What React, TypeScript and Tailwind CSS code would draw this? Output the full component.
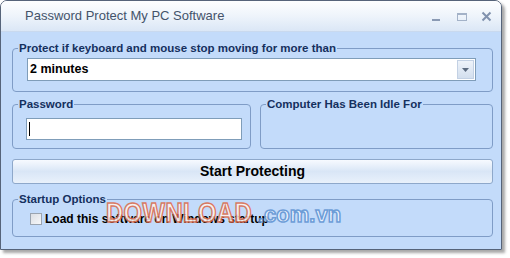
import React from "react";

const F = { fontFamily: '"Liberation Sans", Arial, sans-serif' };

function Group({
  label,
  className,
  inner,
  children,
}: {
  label: string;
  className?: string;
  inner?: string;
  children?: React.ReactNode;
}) {
  return (
    <fieldset
      className={
        "border border-[#7f9cc6] rounded-[4px] min-w-0 " + (className ?? "")
      }
    >
      <legend className="ml-[5px] px-[1px] text-[11.5px] leading-[14px] font-bold text-[#15305e]">
        {label}
      </legend>
      <div className={inner}>{children}</div>
    </fieldset>
  );
}

export default function App() {
  return (
    <div className="relative w-[510px] h-[258px] bg-white" style={F}>
      <div className="w-[502px] h-[250px] flex flex-col border border-[#56647a] rounded-t-[7px] shadow-[3px_3px_3px_rgba(0,0,0,0.35)] overflow-hidden">
        {/* title bar */}
        <div className="h-[31px] shrink-0 flex items-center bg-gradient-to-b from-[#fdfeff] via-[#eef4fb] to-[#dbe7f6] border-b border-[#c9d9ee]">
          <span className="ml-[24px] text-[13px] text-[#44536a]">
            Password Protect My PC Software
          </span>
          <div className="ml-auto flex items-center gap-[14px] mr-[9px]">
            <svg width="11" height="11" viewBox="0 0 11 11">
              <rect x="1" y="8" width="8" height="2" fill="#8a9ab4" />
            </svg>
            <svg width="11" height="11" viewBox="0 0 11 11">
              <rect x="1.5" y="2.5" width="9" height="7" fill="none" stroke="#a3b2c8" strokeWidth="1" />
              <rect x="1" y="2" width="10" height="2" fill="#a3b2c8" />
            </svg>
            <svg width="11" height="11" viewBox="0 0 11 11">
              <path d="M1.5 1.5 L9.5 9.5 M9.5 1.5 L1.5 9.5" stroke="#8192ae" strokeWidth="2" />
            </svg>
          </div>
        </div>

        {/* body */}
        <div className="flex-1 bg-[#c3dbfa] pl-[11px] pr-[8px] pt-[9px] flex flex-col">
          <Group
            label="Protect if keyboard and mouse stop moving for more than"
            inner="pl-[14px] pr-[16px] pt-[3px] pb-[10px]"
          >
            <div className="h-[23px] bg-white border border-[#7f9db9] flex items-center">
              <span className="ml-[2px] text-[12.5px] font-bold text-black">2 minutes</span>
              <div className="ml-auto mr-[1px] w-[17px] h-[19px] bg-gradient-to-b from-[#eef3fa] to-[#d3dfee] border border-[#c3d1e4] flex items-center justify-center">
                <svg width="7" height="4" viewBox="0 0 7 4">
                  <path d="M0 0 H7 L3.5 4 Z" fill="#5c6b80" />
                </svg>
              </div>
            </div>
          </Group>

          <div className="mt-[5px] flex gap-[9px]">
            <Group label="Password" className="w-[239px]" inner="pl-[13px] pr-[8px] pt-[7px] pb-[7px]">
              <div className="h-[22px] bg-white border border-[#7f9db9] flex items-center">
                <div className="ml-[2px] w-[1px] h-[14px] bg-black" />
              </div>
            </Group>
            <Group label="Computer Has Been Idle For" className="flex-1" inner="h-[37px]" />
          </div>

          <button className="mt-[10px] h-[25px] rounded-[3px] border border-[#8ea8ca] bg-gradient-to-b from-[#f7faff] via-[#d9e6f6] to-[#e9f1fb] text-[14px] font-bold text-black cursor-default">
            Start Protecting
          </button>

          <Group label="Startup Options" className="mt-[8px]" inner="pl-[17px] pt-[6px] pb-[10px]">
            <div className="flex items-center gap-[3px]">
              <div className="w-[12px] h-[12px] border border-[#9aa4b0] bg-gradient-to-br from-[#dcdfe4] to-[#f6f7f9]" />
              <span className="text-[12px] font-bold text-black leading-[14px]">
                Load this software on Windows startup
              </span>
            </div>
          </Group>
        </div>
      </div>

      {/* watermark overlay */}
      <div className="absolute left-[106px] top-[193px] pointer-events-none flex items-baseline opacity-85">
        <span className="inline-block origin-left scale-x-[0.88] text-[27px] font-bold tracking-[0.5px] text-[#fff4ef] [-webkit-text-stroke:1.5px_#dc6a4a]">
          DOWNLOAD
        </span>
        <span className="-ml-[14px] inline-block text-[22px] font-bold text-[#f4f8ff] [-webkit-text-stroke:1.5px_#5f93d2]">
          .com.vn
        </span>
      </div>
    </div>
  );
}
